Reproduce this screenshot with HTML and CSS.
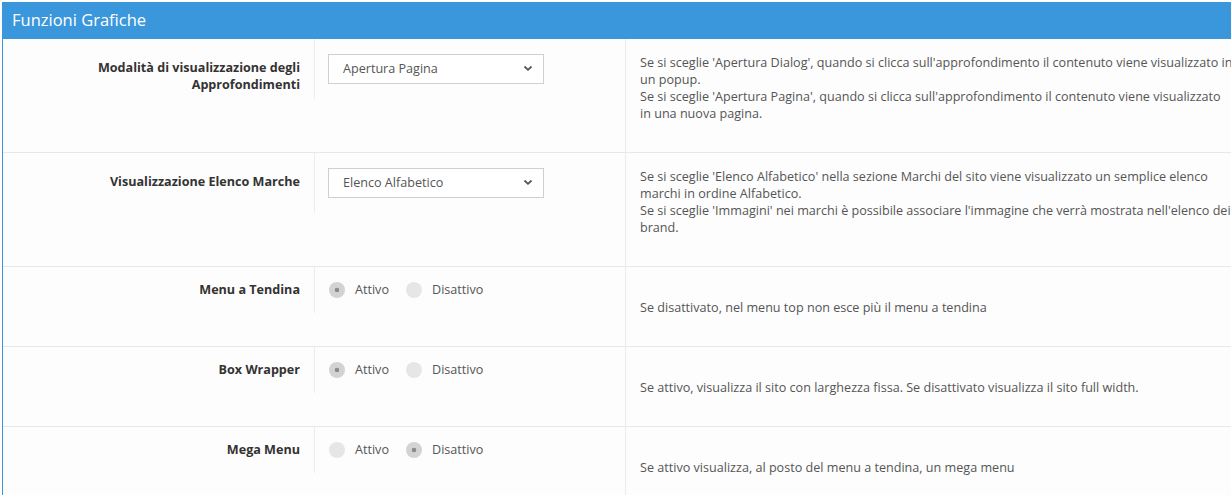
FILE: index.html
```html
<!DOCTYPE html>
<html lang="it">

<head>
  <meta charset="UTF-8" />
  <meta name="viewport" content="width=device-width, initial-scale=1.0" />
  <title>Funzioni Grafiche</title>
  <link rel="stylesheet" href="styles.css">
</head>

<body>
  <div class="panel">
    <div class="panel-heading">Funzioni Grafiche</div>

    <div class="row row-select">
      <div class="field">
        <label class="label">Modalità di visualizzazione degli Approfondimenti</label>
        <div class="control">
          <div class="select-wrap">
            <select class="select">
              <option>Apertura Pagina</option>
              <option>Apertura Dialog</option>
            </select>
            <svg class="chevron" width="10" height="7" viewBox="0 0 10 7"><path d="M1.5 1.5 L5 4.8 L8.5 1.5" fill="none" stroke="#555" stroke-width="1.8" /></svg>
          </div>
        </div>
      </div>
      <div class="desc">
        Se si sceglie 'Apertura Dialog', quando si clicca sull'approfondimento il contenuto viene visualizzato in un popup.<br>
        Se si sceglie 'Apertura Pagina', quando si clicca sull'approfondimento il contenuto viene visualizzato in una nuova pagina.
      </div>
    </div>

    <div class="row row-select">
      <div class="field">
        <label class="label">Visualizzazione Elenco Marche</label>
        <div class="control">
          <div class="select-wrap">
            <select class="select">
              <option>Elenco Alfabetico</option>
              <option>Immagini</option>
            </select>
            <svg class="chevron" width="10" height="7" viewBox="0 0 10 7"><path d="M1.5 1.5 L5 4.8 L8.5 1.5" fill="none" stroke="#555" stroke-width="1.8" /></svg>
          </div>
        </div>
      </div>
      <div class="desc">
        Se si sceglie 'Elenco Alfabetico' nella sezione Marchi del sito viene visualizzato un semplice elenco marchi in ordine Alfabetico.<br>
        Se si sceglie 'Immagini' nei marchi è possibile associare l'immagine che verrà mostrata nell'elenco dei brand.
      </div>
    </div>

    <div class="row row-radio">
      <div class="field">
        <label class="label">Menu a Tendina</label>
        <div class="control radios">
          <label class="radio"><input type="radio" name="tendina" checked> Attivo</label>
          <label class="radio"><input type="radio" name="tendina"> Disattivo</label>
        </div>
      </div>
      <div class="desc">Se disattivato, nel menu top non esce più il menu a tendina</div>
    </div>

    <div class="row row-radio">
      <div class="field">
        <label class="label">Box Wrapper</label>
        <div class="control radios">
          <label class="radio"><input type="radio" name="wrapper" checked> Attivo</label>
          <label class="radio"><input type="radio" name="wrapper"> Disattivo</label>
        </div>
      </div>
      <div class="desc">Se attivo, visualizza il sito con larghezza fissa. Se disattivato visualizza il sito full width.</div>
    </div>

    <div class="row row-radio">
      <div class="field">
        <label class="label">Mega Menu</label>
        <div class="control radios">
          <label class="radio"><input type="radio" name="mega"> Attivo</label>
          <label class="radio"><input type="radio" name="mega" checked> Disattivo</label>
        </div>
      </div>
      <div class="desc">Se attivo visualizza, al posto del menu a tendina, un mega menu</div>
    </div>
  </div>
</body>

</html>
```

FILE: styles.css
```css
* {
  margin: 0;
  padding: 0;
  box-sizing: border-box;
}

body {
  background-color: #fff;
  font-family: 'Open Sans', 'Liberation Sans', sans-serif;
  font-size: 12.6px;
  color: #555;
  overflow: hidden;
}

.panel {
  margin: 2px 0 0 2px;
  width: 1247px;
  border-left: 1px solid #3a97db;
}

.panel-heading {
  height: 37px;
  padding: 0 9px;
  background-color: #3a97db;
  color: #fff;
  font-size: 16.5px;
  line-height: 36px;
}

.row {
  display: flex;
  align-items: flex-start;
  background: #fdfdfd;
  border-bottom: 1px solid #e8e8e8;
}

.field {
  display: flex;
  width: 622px;
  flex-shrink: 0;
}

.label {
  width: 312px;
  flex-shrink: 0;
  padding: 20px 14px 0 0;
  border-right: 1px solid #ececec;
  text-align: right;
  font-weight: bold;
  color: #333;
  line-height: 17px;
}

.row-radio .label {
  padding-top: 14px;
}

.control {
  padding: 15px 0 15px 13px;
}

/* select */
.select-wrap {
  position: relative;
  width: 216px;
}

.select {
  display: block;
  width: 100%;
  height: 30px;
  padding: 0 14px 2px;
  border: 1px solid #cfcfcf;
  border-radius: 0;
  background: #fff;
  appearance: none;
  font-family: inherit;
  font-size: 12.6px;
  color: #555;
}

.chevron {
  position: absolute;
  right: 11px;
  top: 11px;
  pointer-events: none;
}

/* radio */
.radios {
  display: flex;
  gap: 16px;
  line-height: 16px;
}

.radio {
  display: flex;
  align-items: center;
  gap: 10px;
}

.radio input {
  appearance: none;
  width: 16px;
  height: 16px;
  border-radius: 50%;
  background: #e6e6e6;
  margin: 0 0 0 1px;
}

.radio input:checked {
  background: radial-gradient(circle, #8c8c8c 0 2px, #d3d3d3 2.6px);
}

.desc {
  flex: 1;
  align-self: stretch;
  padding: 15px 15px 30px 14px;
  border-left: 1px solid #ececec;
  line-height: 17px;
}

.row-radio .desc {
  padding-top: 32px;
}
```
